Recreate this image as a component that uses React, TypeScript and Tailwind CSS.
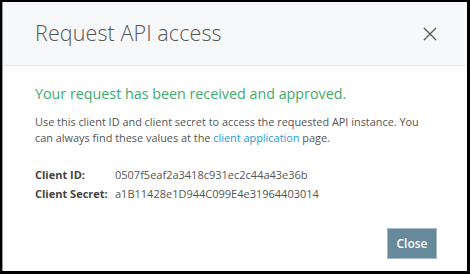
import React from 'react';

export default function App() {
  return (
    <div className="w-[470px] h-[274px] bg-black pl-[2px] pt-[2px] pr-[3px] pb-[3px]" style={{ fontFamily: '"Open Sans", "Liberation Sans", sans-serif' }}>
      <div className="h-full bg-white flex flex-col border-l border-[#9a9a9a]">
        {/* Header */}
        <div className="h-[64px] bg-[#f7f8fa] border-b border-[#e4e7eb] flex items-center justify-between pl-[32px] pr-[30px] shrink-0">
          <h1 className="text-[21.5px] font-light text-[#555] tracking-[0.1px]">Request API access</h1>
          <svg width="14" height="14" viewBox="0 0 14 14" className="text-[#555]">
            <path d="M1 1L13 13M13 1L1 13" stroke="currentColor" strokeWidth="1.3" />
          </svg>
        </div>
        {/* Body */}
        <div className="flex-1 pl-[32px] pr-[30px] pt-[18px] flex flex-col">
          <p className="text-[14.3px] text-[#3daa6e] leading-[20px]">Your request has been received and approved.</p>
          <p className="mt-[10px] max-w-[392px] text-[10.9px] leading-[16px] text-[#555]">
            Use this client ID and client secret to access the requested API instance. You can always find these values at the <span className="text-[#1a9ad6]">client application</span> page.
          </p>
          <div className="mt-[21px] grid grid-cols-[80px_1fr] gap-y-[4px] text-[11px] leading-[15px] text-[#555]">
            <span className="font-bold text-[#444]">Client ID:</span>
            <span>0507f5eaf2a3418c931ec2c44a43e36b</span>
            <span className="font-bold text-[#444]">Client Secret:</span>
            <span>a1B11428e1D944C099E4e31964403014</span>
          </div>
          <div className="flex justify-end mt-auto mb-[12px]">
            <button className="w-[50px] h-[31px] bg-[#66899b] border border-[#a6bcc7] text-white text-[12px] font-semibold">Close</button>
          </div>
        </div>
      </div>
    </div>
  );
}
